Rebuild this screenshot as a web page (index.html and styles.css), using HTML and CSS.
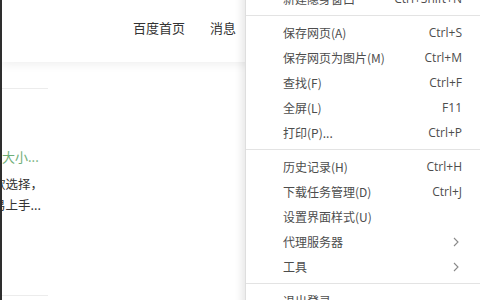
FILE: index.html
```html
<!DOCTYPE html>
<html lang="zh-CN">
<head>
<meta charset="utf-8">
<title>菜单</title>
<link rel="stylesheet" href="styles.css">
</head>
<body>
<div class="page">
  <header class="topbar">
    <nav class="nav">
      <a class="nav-link">百度首页</a>
      <a class="nav-link">消息</a>
    </nav>
  </header>
  <main class="content">
    <div class="rule"></div>
    <div class="entry">
      <p class="entry-title">大小...</p>
      <p class="entry-desc clip">款选择，</p>
      <p class="entry-desc clip">易上手...</p>
    </div>
    <div class="rule rule-bottom"></div>
  </main>
</div>

<div class="menu">
  <div class="menu-item"><span>新建隐身窗口</span><span class="key">Ctrl+Shift+N</span></div>
  <div class="menu-sep"></div>
  <div class="menu-item"><span>保存网页(A)</span><span class="key">Ctrl+S</span></div>
  <div class="menu-item"><span>保存网页为图片(M)</span><span class="key">Ctrl+M</span></div>
  <div class="menu-item"><span>查找(F)</span><span class="key">Ctrl+F</span></div>
  <div class="menu-item"><span>全屏(L)</span><span class="key">F11</span></div>
  <div class="menu-item"><span>打印(P)...</span><span class="key">Ctrl+P</span></div>
  <div class="menu-sep"></div>
  <div class="menu-item"><span>历史记录(H)</span><span class="key">Ctrl+H</span></div>
  <div class="menu-item"><span>下载任务管理(D)</span><span class="key">Ctrl+J</span></div>
  <div class="menu-item"><span>设置界面样式(U)</span></div>
  <div class="menu-item"><span>代理服务器</span><svg class="chev" width="6" height="10" viewBox="0 0 6 10"><polyline points="1,1 5,5 1,9" fill="none" stroke="#8a8a8a" stroke-width="1.1"/></svg></div>
  <div class="menu-item"><span>工具</span><svg class="chev" width="6" height="10" viewBox="0 0 6 10"><polyline points="1,1 5,5 1,9" fill="none" stroke="#8a8a8a" stroke-width="1.1"/></svg></div>
  <div class="menu-sep"></div>
  <div class="menu-item"><span>退出登录</span></div>
</div>
</body>
</html>
```

FILE: styles.css
```css
* { box-sizing: border-box; }

html, body {
  margin: 0;
  padding: 0;
  width: 480px;
  height: 300px;
  overflow: hidden;
  background: #ffffff;
  font-family: "Noto Sans CJK SC", "Noto Sans", sans-serif;
}

.page {
  width: 480px;
  height: 300px;
  border-left: 2px solid #2e2e2e;
  overflow: hidden;
  background: #ffffff;
}

.topbar {
  height: 62px;
  padding-top: 20px;
  background: #ffffff;
  box-shadow: 0 2px 10px rgba(0, 0, 0, 0.07);
  position: relative;
}

.nav {
  display: flex;
  gap: 25px;
  padding-left: 131px;
}

.nav-link {
  font-size: 13px;
  line-height: 16px;
  color: #333333;
}

.content {
  padding-top: 26px;
}

.rule {
  width: 46px;
  height: 1px;
  background: #ececec;
}

.entry {
  padding-top: 58px;
}

.entry-title {
  margin: 0 0 6px 0;
  font-size: 13px;
  line-height: 20px;
  color: #6fae77;
  white-space: nowrap;
}

.entry-desc {
  margin: 0;
  font-size: 12.5px;
  line-height: 21px;
  color: #333333;
  white-space: nowrap;
}

.clip {
  margin-left: -9px;
}

.rule-bottom {
  margin-top: 80px;
}

.menu {
  position: absolute;
  top: -14px;
  left: 245px;
  width: 240px;
  background: #ffffff;
  border-left: 1px solid #dedede;
  box-shadow: -3px 0 8px rgba(0, 0, 0, 0.10);
  font-size: 12px;
  color: #4d4d4d;
}

.menu-item {
  height: 25px;
  display: flex;
  align-items: center;
  justify-content: space-between;
  padding-left: 37px;
  padding-right: 23px;
  white-space: nowrap;
}

.key {
  font-family: "Open Sans", "Noto Sans", sans-serif;
  font-size: 12px;
  color: #4d4d4d;
}

.chev {
  margin-right: 3px;
}

.menu-sep {
  height: 1px;
  margin: 4px 0;
  background: #e3e3e3;
}
```
